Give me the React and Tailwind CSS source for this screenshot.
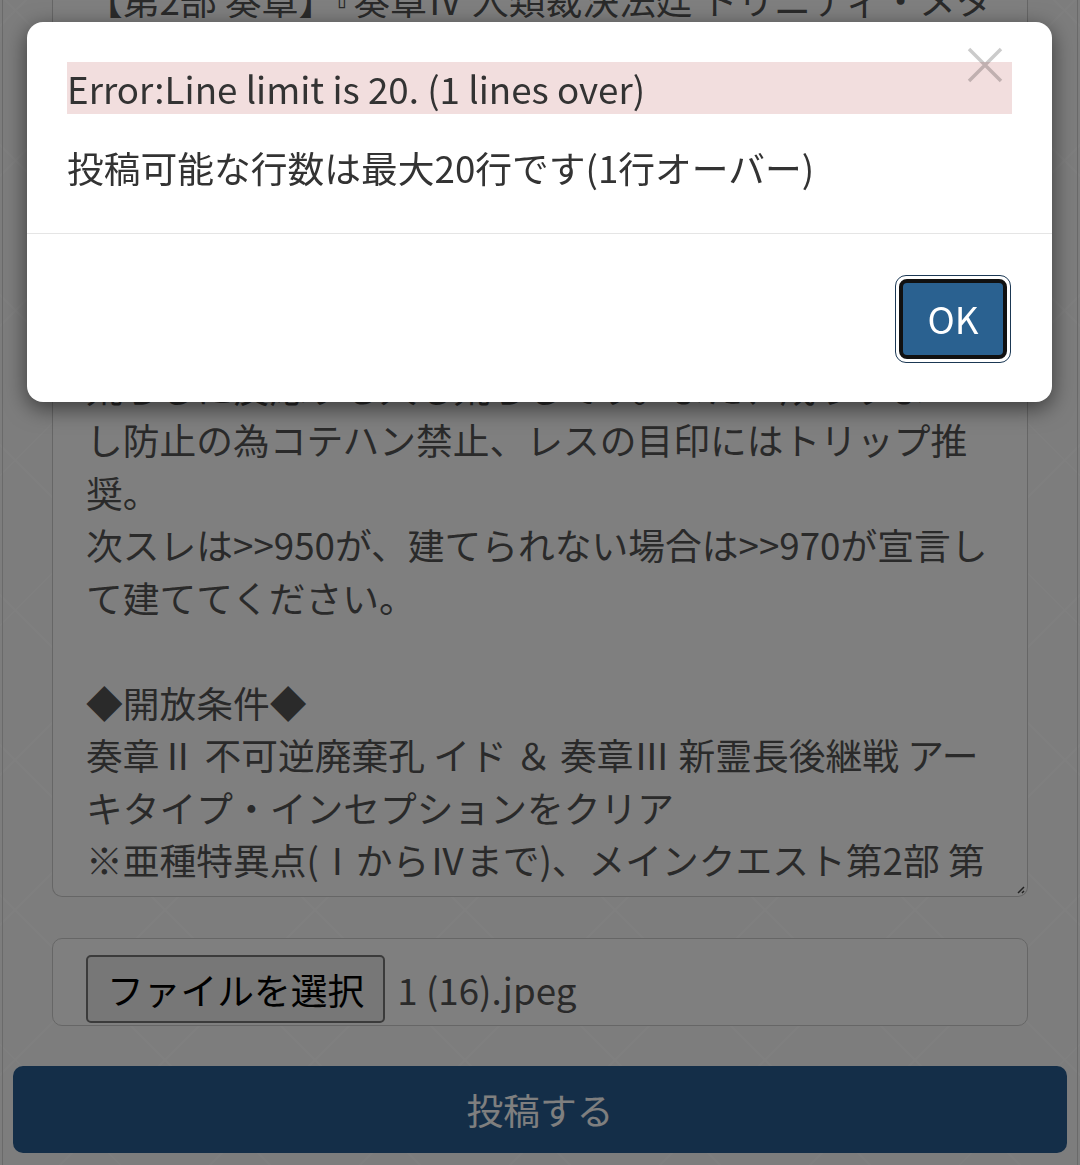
import React from 'react'

const FONT = "font-['Noto_Sans_CJK_JP','Noto_Sans',sans-serif]"

// textarea content (scrolled so only part of it is visible)
const LINES = [
  '【第2部 奏章】『奏章Ⅳ 人類裁決法廷 トリニティ・メタ',
  'トロニオス』ネタバレスレ',
  'ネタバレは解禁済みです。',
  '',
  '◆注意事項◆',
  'sage推奨。荒らし・煽りはスルーでお願いします。',
  '他ゲーム・他作品の話題は専用スレでどうぞ。',
  '荒らしに反応する人も荒らしです。また、成りすま',
  'し防止の為コテハン禁止、レスの目印にはトリップ推',
  '奨。',
  '次スレは>>950が、建てられない場合は>>970が宣言し',
  'て建ててください。',
  '',
  '◆開放条件◆',
  '奏章Ⅱ 不可逆廃棄孔 イド ＆ 奏章Ⅲ 新霊長後継戦 アー',
  'キタイプ・インセプションをクリア',
  '※亜種特異点(ⅠからⅣまで)、メインクエスト第2部 第',
  '6章 妖精円卓領域 アヴァロン・ル・フェまでクリア',
]

export default function App() {
  return (
    <div className={`${FONT} relative min-h-[1165px] bg-[#fbfbfb] bg-[repeating-linear-gradient(45deg,transparent_0_104px,#ffffff_104px_106px),repeating-linear-gradient(-45deg,transparent_0_104px,#ffffff_104px_106px)]`}>
      <div className="mx-[2px] min-h-[1165px] border-x border-[#d4d4d4] px-[10px] pb-[40px]">
        <div className="px-[39px]">
          {/* textarea */}
          <div className="relative h-[897px] overflow-hidden rounded-b-[10px] border border-t-0 border-[#cccccc] bg-white px-[33px]">
            <div className="-mt-[27px] text-[36.75px] leading-[52.5px] text-[#555555]">
              {LINES.map((l, i) => (
                <div key={i} className={`h-[52.5px] whitespace-pre ${i === 0 ? 'mb-[20px]' : ''}`}>
                  {l}
                </div>
              ))}
            </div>
            <svg className="absolute bottom-[2px] right-[2px]" width="10" height="10" viewBox="0 0 10 10">
              <path d="M9 3 L3 9 M9 7 L7 9" stroke="#444" strokeWidth="1.5" />
            </svg>
          </div>

          {/* file input */}
          <div className="mt-[41px] flex h-[88px] items-start rounded-[10px] border border-[#cccccc] bg-white pl-[33px] pt-[16px]">
            <button className="h-[68px] rounded-[5px] border-2 border-[#767676] bg-[#efefef] px-[19px] text-[36.75px] leading-none text-black">
              ファイルを選択
            </button>
            <span className="ml-[12px] text-[36.75px] leading-[68px] text-[#555555]">1 (16).jpeg</span>
          </div>
        </div>

        <button className="mt-[40px] flex h-[87px] w-full items-center justify-center rounded-[10px] bg-[#285c90] text-[36.75px] text-white">
          投稿する
        </button>
      </div>

      {/* backdrop */}
      <div className="fixed inset-0 bg-black/50" />

      {/* modal */}
      <div className="fixed left-[27px] top-[22px] w-[1025px] rounded-[16px] bg-white shadow-[0_6px_22px_rgba(0,0,0,0.55)]">
        <button className="absolute right-[49px] top-[25px] h-[36px] w-[36px] opacity-20">
          <svg width="36" height="36" viewBox="0 0 36 36">
            <path d="M2 2 L34 34 M34 2 L2 34" stroke="#000" strokeWidth="3.5" />
          </svg>
        </button>
        <div className="px-[40px] pb-[39px] pt-[40px] text-[36.75px] text-[#333333]">
          <div className="h-[52px] bg-[#f2dede] leading-[52px]">Error:Line limit is 20. (1 lines over)</div>
          <div className="mt-[27px] leading-[52.5px]">投稿可能な行数は最大20行です(1行オーバー)</div>
        </div>
        <div className="flex justify-end border-t border-[#e5e5e5] pb-[39px] pr-[41px] pt-[41px]">
          <span className="rounded-[11px] border border-[#1b3854] bg-white p-[3px]">
            <button className="flex h-[80px] w-[108px] items-center justify-center rounded-[8px] border-4 border-[#111111] bg-[#2a6190] text-[36.75px] text-white">
              OK
            </button>
          </span>
        </div>
      </div>
    </div>
  )
}
